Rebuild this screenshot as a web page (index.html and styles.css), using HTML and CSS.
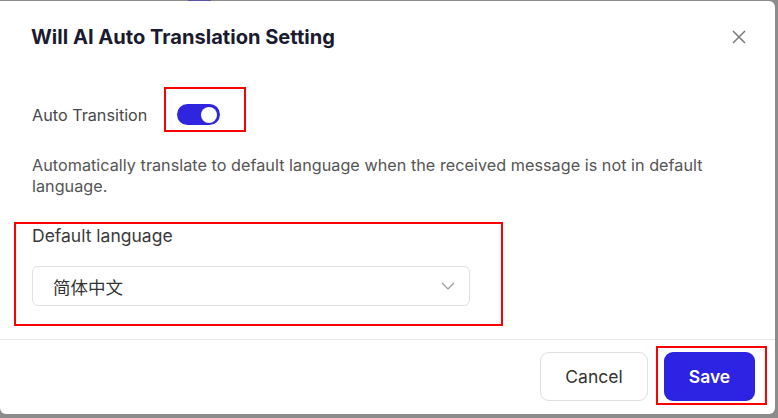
FILE: index.html
```html
<!DOCTYPE html>
<html>
<head>
<meta charset="utf-8">
<link rel="stylesheet" href="styles.css">
</head>
<body>
<div class="topstrip"><span class="tab"></span></div>
<div class="dialog">
  <div class="header">
    <h1 class="title">Will AI Auto Translation Setting</h1>
    <button class="close" aria-label="Close">
      <svg width="14" height="14" viewBox="0 0 14 14"><path d="M1 1L13 13M13 1L1 13" stroke="#7a7a7a" stroke-width="1.5" fill="none"/></svg>
    </button>
  </div>
  <div class="body">
    <div class="row">
      <span class="label">Auto Transition</span>
      <span class="toggle"><span class="knob"></span><span class="mark mark-toggle"></span></span>
    </div>
    <p class="desc">Automatically translate to default language when the received message is not in default language.</p>
    <div class="mark mark-lang">
      <div class="field-label">Default language</div>
      <div class="select">
        <span class="value">简体中文</span>
        <svg width="14" height="8" viewBox="0 0 14 8"><path d="M1 1L7 7L13 1" stroke="#9a9a9a" stroke-width="1.2" fill="none"/></svg>
      </div>
    </div>
  </div>
  <div class="footer">
    <button class="btn cancel">Cancel</button>
    <div class="mark mark-save"><button class="btn save">Save</button></div>
  </div>
</div>
</body>
</html>
```

FILE: styles.css
```css
* { box-sizing: border-box; }
html, body { margin: 0; padding: 0; }
body {
  background: #8c8c8c;
  width: 778px;
  height: 418px;
  overflow: hidden;
  font-family: Inter, "Noto Sans CJK SC", sans-serif;
}
.topstrip { height: 1px; position: relative; }
.tab { position: absolute; left: 188px; width: 23px; top: 0; height: 1px; background: #5a52a8; }
.dialog {
  width: 775px;
  height: 413px;
  background: #fff;
  border-radius: 0 6px 6px 6px;
  display: flex;
  flex-direction: column;
}
.header {
  display: flex;
  align-items: center;
  justify-content: space-between;
  padding: 20px 31px 0 31px;
  height: 52px;
}
.title {
  margin: 0;
  font-size: 20.1px;
  line-height: 28px;
  font-weight: 700;
  color: #1b1b2f;
}
.close {
  border: 0; background: none; padding: 0; margin-right: -2px;
  width: 14px; height: 14px; display: flex;
}
.body { padding: 51px 32px 0 32px; flex: 1; }
.row { display: flex; align-items: center; height: 21px; }
.label { font-size: 16.2px; color: #484848; }
.mark { border: 2px solid #f00; }
.toggle {
  display: block;
  margin-left: 30px;
  width: 43px; height: 21px;
  border-radius: 11px;
  background: #2f25de;
  position: relative;
}
.knob {
  position: absolute;
  right: 3px; top: 2.5px;
  width: 16px; height: 16px;
  border-radius: 50%;
  background: #fff;
}
.mark-toggle {
  position: absolute;
  left: -13px; top: -17px;
  width: 82px; height: 45px;
}
.desc {
  margin: 30px 0 0 0;
  font-size: 16.2px;
  line-height: 21px;
  color: #555;
  width: 710px;
  letter-spacing: 0.03px;
}
.mark-lang {
  margin: 25px 0 0 -18px;
  width: 489px; height: 104px;
  padding: 1px 0 0 16px;
}
.field-label { font-size: 17.5px; color: #3a3a3a; line-height: 22px; }
.select {
  margin-top: 19px;
  width: 438px; height: 40px;
  border: 1px solid #e1e1e1;
  border-radius: 6px;
  display: flex; align-items: center; justify-content: space-between;
  padding: 0 14px 0 20px;
}
.value { font-size: 17.5px; color: #333; }
.footer {
  border-top: 1px solid #e6e6e6;
  height: 75px;
  display: flex;
  justify-content: flex-end;
  align-items: flex-start;
  padding: 6px 8px 0 0;
}
.btn {
  font-family: Inter, sans-serif;
  font-size: 17.5px;
  height: 49px;
  border-radius: 9px;
  cursor: pointer;
}
.cancel {
  margin-top: 6px;
  width: 108px;
  background: #fff;
  border: 1px solid #e0e0e0;
  color: #333;
  margin-right: 8px;
}
.mark-save { width: 111px; height: 59px; padding: 4px 0 0 6px; }
.save {
  width: 91px;
  background: #2d23e2;
  border: 0;
  color: #fff;
  font-weight: 600;
}
```
